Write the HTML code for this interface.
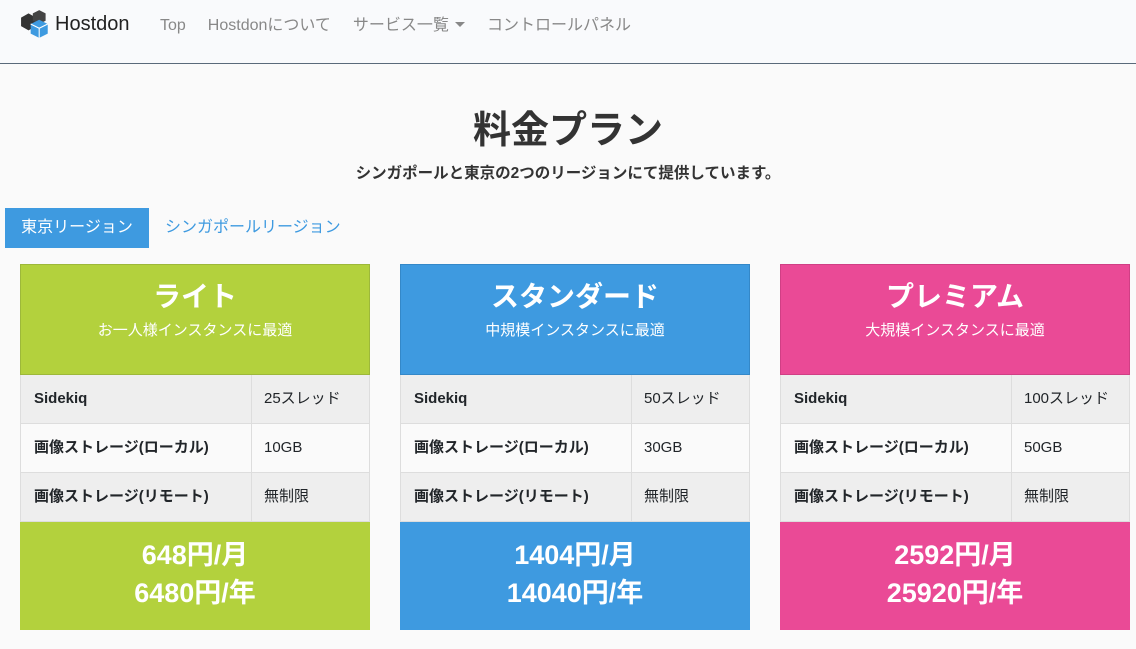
<!DOCTYPE html>
<html><head><meta charset="utf-8"><style>
*{box-sizing:border-box;margin:0;padding:0}
body{width:1136px;height:649px;overflow:hidden;background:#fafafa;font-family:"Liberation Sans","Noto Sans CJK JP",sans-serif;color:#212529}
.nav{height:64px;background:#f9fafc;border-bottom:1px solid #5a6a7a;position:relative}
.brand{position:absolute;left:20px;top:8px;display:flex;align-items:center;font-size:20px;color:#222}
.brand svg{margin-right:3px}
.links{position:absolute;left:160px;top:11px;font-size:16px;color:#888}
.links span{margin-right:22px}
.caret{display:inline-block;border-left:5px solid transparent;border-right:5px solid transparent;border-top:5px solid #888;vertical-align:3px;margin-left:6px}
h1{position:absolute;left:0;width:1136px;top:99px;text-align:center;font-size:38px;font-weight:bold;color:#333}
.sub{position:absolute;left:0;width:1136px;top:161px;text-align:center;font-size:15.5px;font-weight:bold;color:#333}
.tab{position:absolute;top:208px;height:40px;line-height:40px;font-size:16px}
.t1{left:5px;width:144px;background:#3e9ae0;color:#fff;text-align:center}
.t2{left:165px;color:#3e9ae0}
.card{position:absolute;top:264px;width:350px;height:367px}
.hd{height:111px;text-align:center;color:#fff;padding-top:14px}
.hd b{font-size:28px;display:block;line-height:36px}
.hd i{font-style:normal;font-size:15px;display:block;margin-top:4px}
.row{height:49px;display:flex;font-size:15px;border-left:1px solid #ddd;border-right:1px solid #ddd;border-bottom:1px solid #ddd}
.row div:first-child{width:231px;padding-left:13px;font-weight:bold;border-right:1px solid #ddd;line-height:48px}
.row div:last-child{padding-left:12px;line-height:48px}
.g{background:#eee}.w{background:#fafafa}
.ft{height:108px;text-align:center;color:#fff;font-weight:bold;font-size:27px;padding-top:14px;line-height:38px}
</style></head><body>
<div class="nav">
<div class="brand"><svg width="32" height="32" viewBox="0 0 30 30"><path d="M1 9l7-4 7 4v8l-7 4-7-4z" fill="#333"/><path d="M12 5l6-3 6 3v7l-6 3-6-3z" fill="#444"/><path d="M10 15l8-4 8 4v9l-8 4-8-4z" fill="#3e9ae0"/><path d="M10 15l8 4 8-4M18 19v9" stroke="#fff" fill="none"/></svg>Hostdon</div>
<div class="links"><span>Top</span><span>Hostdonについて</span><span>サービス一覧<i class="caret"></i></span><span>コントロールパネル</span></div>
</div>
<h1>料金プラン</h1>
<div class="sub">シンガポールと東京の2つのリージョンにて提供しています。</div>
<div class="tab t1">東京リージョン</div>
<div class="tab t2">シンガポールリージョン</div>

<div class="card" style="left:20px">
<div class="hd" style="background:#b3d13d;border:1px solid #9db83a"><b>ライト</b><i>お一人様インスタンスに最適</i></div>
<div class="row g"><div>Sidekiq</div><div>25スレッド</div></div>
<div class="row w"><div>画像ストレージ(ローカル)</div><div>10GB</div></div>
<div class="row g"><div>画像ストレージ(リモート)</div><div>無制限</div></div>
<div class="ft" style="background:#b3d13d">648円/月<br>6480円/年</div>
</div>
<div class="card" style="left:400px">
<div class="hd" style="background:#3e9ae0;border:1px solid #3488c8"><b>スタンダード</b><i>中規模インスタンスに最適</i></div>
<div class="row g"><div>Sidekiq</div><div>50スレッド</div></div>
<div class="row w"><div>画像ストレージ(ローカル)</div><div>30GB</div></div>
<div class="row g"><div>画像ストレージ(リモート)</div><div>無制限</div></div>
<div class="ft" style="background:#3e9ae0">1404円/月<br>14040円/年</div>
</div>
<div class="card" style="left:780px">
<div class="hd" style="background:#ea4a96;border:1px solid #d03f85"><b>プレミアム</b><i>大規模インスタンスに最適</i></div>
<div class="row g"><div>Sidekiq</div><div>100スレッド</div></div>
<div class="row w"><div>画像ストレージ(ローカル)</div><div>50GB</div></div>
<div class="row g"><div>画像ストレージ(リモート)</div><div>無制限</div></div>
<div class="ft" style="background:#ea4a96">2592円/月<br>25920円/年</div>
</div>
</body></html>
